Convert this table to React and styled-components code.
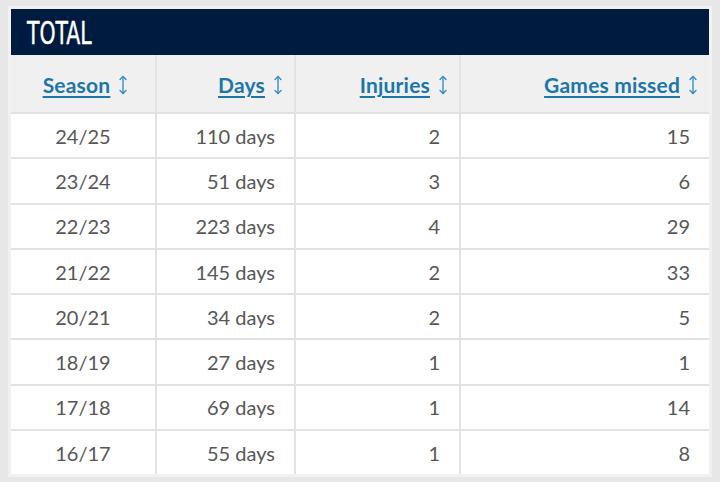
import React from "react";
import styled, { createGlobalStyle } from "styled-components";

const Global = createGlobalStyle`
  html, body { margin: 0; padding: 0; background: #e7e7e7; }
  body { font-family: Lato, "Noto Sans", sans-serif; }
`;

const Page = styled.div`
  padding: 6px 8px 5px 8px;
`;

const Card = styled.div`
  width: 698px;
  padding: 3px;
  background: #f1f1f1;
`;

const TitleBar = styled.div`
  height: 46px;
  background: #001b40;
  display: flex;
  align-items: center;
  padding-left: 16px;
`;

const Title = styled.h2`
  margin: 0;
  color: #fff;
  font-family: "Liberation Sans Narrow", "DejaVu Sans Condensed", sans-serif;
  font-weight: 400;
  font-size: 32px;
  line-height: 1;
  display: inline-block;
  transform: scaleX(0.71);
  transform-origin: left center;
  -webkit-text-stroke: 0.4px #fff;
  padding-top: 1px;
`;

const Grid = styled.div`
  display: grid;
  grid-template-columns: 144px 137px 163px 248px;
  grid-template-rows: 57px repeat(8, 43.3px);
  gap: 2px;
  background: #e2e2e2;
`;

const HeadCell = styled.div`
  background: #f0f0f0;
  display: flex;
  align-items: center;
  justify-content: ${(p) => (p.$center ? "center" : "flex-end")};
  padding: ${(p) => (p.$center ? "2px 0 0 4px" : "2px 12px 0 0")};
  gap: 9px;
`;

const SortLink = styled.a`
  color: #1c76aa;
  font-weight: 700;
  font-size: 21px;
  letter-spacing: 0.2px;
  text-decoration: underline;
  text-decoration-thickness: 2px;
  text-underline-offset: 3px;
  cursor: pointer;
`;

const Cell = styled.div`
  background: #fff;
  display: flex;
  align-items: center;
  justify-content: ${(p) => (p.$center ? "center" : "flex-end")};
  padding: ${(p) => (p.$center ? "0" : "0 19px 0 0")};
  color: #575757;
  font-size: 20px;
`;

const SortIcon = () => (
  <svg width="8" height="20" viewBox="0 0 8 20" fill="none" stroke="#3b8dc2" strokeWidth="1.4" strokeLinecap="round" strokeLinejoin="round">
    <path d="M4 1.5V18.5" />
    <path d="M1 4.5L4 1.5L7 4.5" />
    <path d="M1 15.5L4 18.5L7 15.5" />
  </svg>
);

const rows = [
  ["24/25", "110 days", "2", "15"],
  ["23/24", "51 days", "3", "6"],
  ["22/23", "223 days", "4", "29"],
  ["21/22", "145 days", "2", "33"],
  ["20/21", "34 days", "2", "5"],
  ["18/19", "27 days", "1", "1"],
  ["17/18", "69 days", "1", "14"],
  ["16/17", "55 days", "1", "8"],
];

const heads = ["Season", "Days", "Injuries", "Games missed"];

export default function App() {
  return (
    <>
      <Global />
      <Page>
        <Card>
          <TitleBar>
            <Title>TOTAL</Title>
          </TitleBar>
          <Grid>
            {heads.map((h, i) => (
              <HeadCell key={h} $center={i === 0}>
                <SortLink>{h}</SortLink>
                <SortIcon />
              </HeadCell>
            ))}
            {rows.map((r) =>
              r.map((v, i) => (
                <Cell key={r[0] + i} $center={i === 0}>
                  {v}
                </Cell>
              ))
            )}
          </Grid>
        </Card>
      </Page>
    </>
  );
}
